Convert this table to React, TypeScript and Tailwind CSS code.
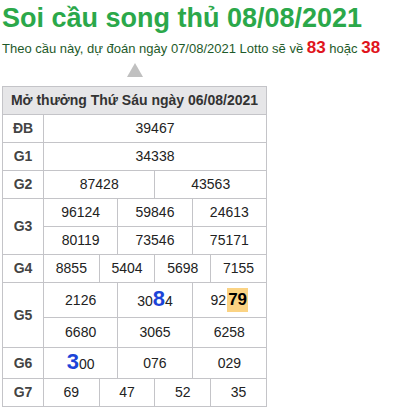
import React from "react";

const cell = "border border-[#c4c4c8] text-center";
const label = "border border-[#c4c4c8] text-center font-bold text-[#444] text-[14px]";

const Big = ({ children }: { children: React.ReactNode }) => (
  <span className="text-[22px] font-bold text-[#1c44d8] leading-none">{children}</span>
);

export default function App() {
  return (
    <div className="px-[2px] bg-white" style={{ fontFamily: '"Liberation Sans", Arial, sans-serif' }}>
      <h1 className="text-[27px] font-bold text-[#2ba84a] leading-[34px] pt-[1px]">
        Soi cầu song thủ 08/08/2021
      </h1>
      <p className="text-[13px] text-[#1e5a2a] leading-[20px] mt-[3px]">
        Theo cầu này, dự đoán ngày 07/08/2021 Lotto sẽ về{" "}
        <b className="text-[17px] text-[#e0141c]">83</b> hoặc{" "}
        <b className="text-[17px] text-[#e0141c]">38</b>
      </p>
      <div className="flex w-[265px] justify-center pt-[4px] pb-[9px]">
        <svg width="16" height="14" viewBox="0 0 16 14">
          <polygon points="8,0 16,14 0,14" fill="#c0c0c0" />
        </svg>
      </div>
      <table className="table-fixed border-collapse w-[265px] text-[14px] text-[#222]">
        <colgroup>
          <col className="w-[41px]" />
          {Array.from({ length: 12 }).map((_, i) => (
            <col key={i} />
          ))}
        </colgroup>
        <tbody>
          <tr className="h-[28px]">
            <td colSpan={13} className="border border-[#c4c4c8] bg-[#e6e6e8] text-center font-bold text-[14px] text-[#333]">
              Mở thưởng Thứ Sáu ngày 06/08/2021
            </td>
          </tr>
          <tr className="h-[28px]">
            <td className={label}>ĐB</td>
            <td colSpan={12} className={cell}>39467</td>
          </tr>
          <tr className="h-[28px]">
            <td className={label}>G1</td>
            <td colSpan={12} className={cell}>34338</td>
          </tr>
          <tr className="h-[28px]">
            <td className={label}>G2</td>
            <td colSpan={6} className={cell}>87428</td>
            <td colSpan={6} className={cell}>43563</td>
          </tr>
          <tr className="h-[28px]">
            <td rowSpan={2} className={label}>G3</td>
            <td colSpan={4} className={cell}>96124</td>
            <td colSpan={4} className={cell}>59846</td>
            <td colSpan={4} className={cell}>24613</td>
          </tr>
          <tr className="h-[28px]">
            <td colSpan={4} className={cell}>80119</td>
            <td colSpan={4} className={cell}>73546</td>
            <td colSpan={4} className={cell}>75171</td>
          </tr>
          <tr className="h-[28px]">
            <td className={label}>G4</td>
            <td colSpan={3} className={cell}>8855</td>
            <td colSpan={3} className={cell}>5404</td>
            <td colSpan={3} className={cell}>5698</td>
            <td colSpan={3} className={cell}>7155</td>
          </tr>
          <tr className="h-[35px]">
            <td rowSpan={2} className={label}>G5</td>
            <td colSpan={4} className={cell}>2126</td>
            <td colSpan={4} className={cell}>
              30<Big>8</Big>4
            </td>
            <td colSpan={4} className={cell}>
              92
              <span className="inline-block bg-[#fbd383] font-bold text-[17px] text-black px-[1px] leading-[24px] ml-[1px]">
                79
              </span>
            </td>
          </tr>
          <tr className="h-[30px]">
            <td colSpan={4} className={cell}>6680</td>
            <td colSpan={4} className={cell}>3065</td>
            <td colSpan={4} className={cell}>6258</td>
          </tr>
          <tr className="h-[31px]">
            <td className={label}>G6</td>
            <td colSpan={4} className={cell}>
              <Big>3</Big>00
            </td>
            <td colSpan={4} className={cell}>076</td>
            <td colSpan={4} className={cell}>029</td>
          </tr>
          <tr className="h-[28px]">
            <td className={label}>G7</td>
            <td colSpan={3} className={cell}>69</td>
            <td colSpan={3} className={cell}>47</td>
            <td colSpan={3} className={cell}>52</td>
            <td colSpan={3} className={cell}>35</td>
          </tr>
        </tbody>
      </table>
    </div>
  );
}
